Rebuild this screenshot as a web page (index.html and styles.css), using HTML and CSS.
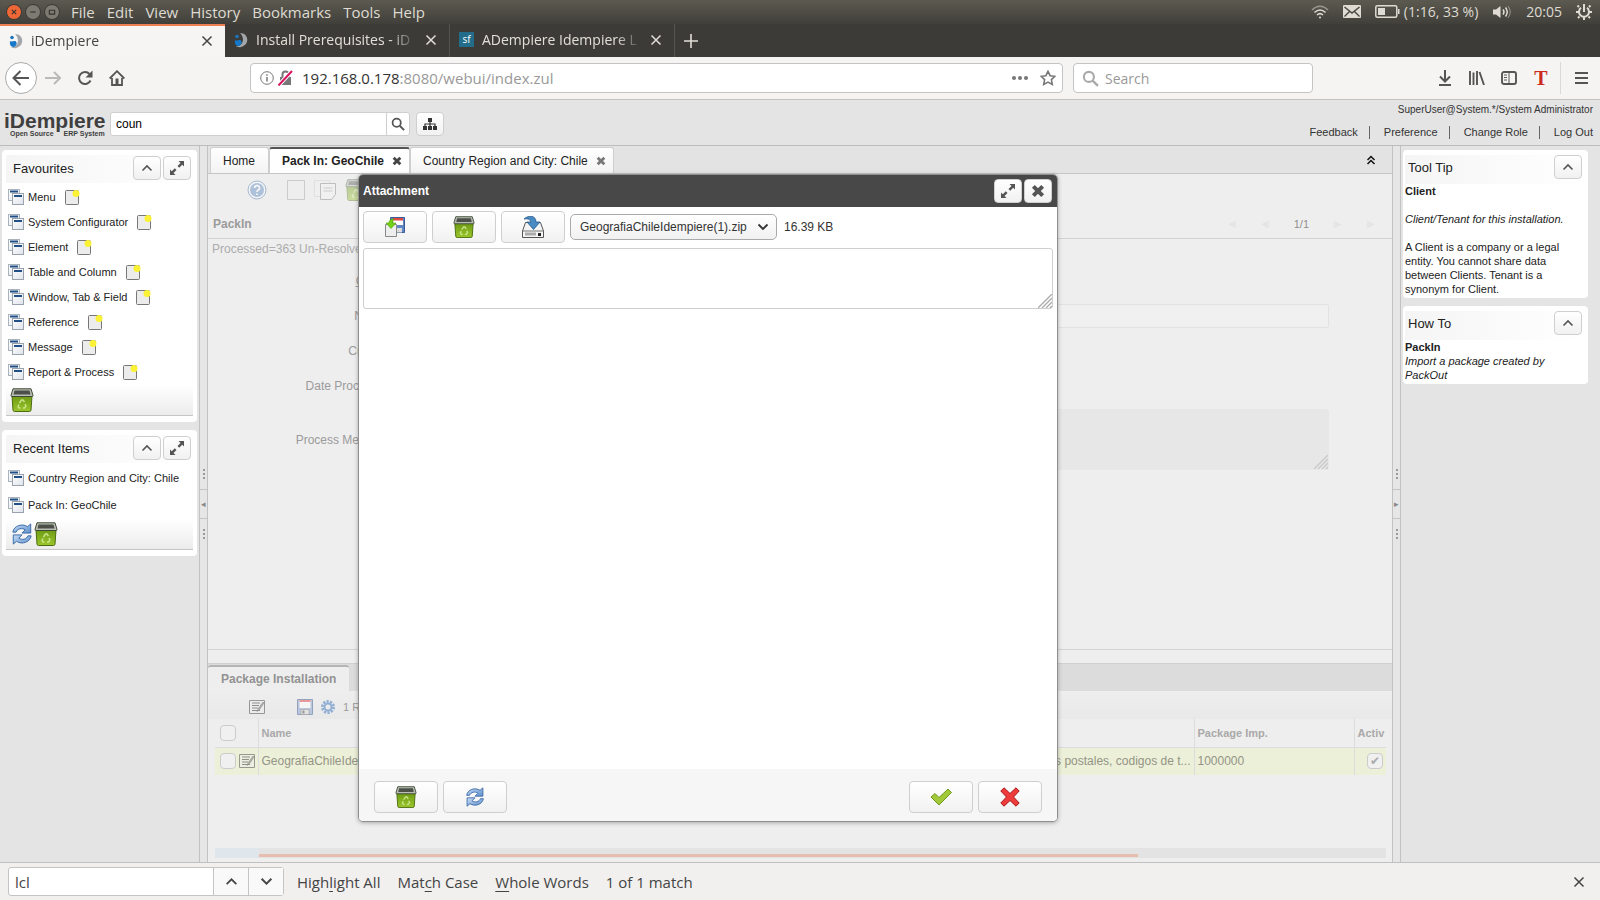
FILE: index.html
```
<!DOCTYPE html>
<html lang="en">
<head>
    <meta charset="UTF-8">
    <meta name="viewport" content="width=device-width, initial-scale=1.0">
    <title>iDempiere</title>
    <link rel="stylesheet" href="styles.css">
</head>
<body>
    <svg class="sprite" aria-hidden="true">
        <defs>
            <linearGradient id="green" x1="0" y1="0" x2="0" y2="1"><stop offset="0" stop-color="#6d9a14"/><stop offset="1" stop-color="#9cc62c"/></linearGradient>
            <linearGradient id="blue" x1="0" y1="0" x2="1" y2="1"><stop offset="0" stop-color="#c8dcf6"/><stop offset="1" stop-color="#5d8fcb"/></linearGradient>
            <linearGradient id="paper" x1="0" y1="0" x2="1" y2="1"><stop offset="0" stop-color="#ffffff"/><stop offset="1" stop-color="#dfe3ea"/></linearGradient>
        </defs>
        <symbol id="i-close" viewBox="0 0 12 12"><path d="M1.5 1.5l9 9M10.5 1.5l-9 9" fill="none" stroke="currentColor" stroke-width="1.5"/></symbol>
        <symbol id="i-times" viewBox="0 0 12 12"><path d="M2 2l8 8M10 2l-8 8" fill="none" stroke="currentColor" stroke-width="3.4"/></symbol>
        <symbol id="i-up" viewBox="0 0 12 12"><path d="M1.500 8.500L6 4l4.500 4.500" fill="none" stroke="currentColor" stroke-width="1.600"/></symbol>
        <symbol id="i-down" viewBox="0 0 12 12"><path d="M1.500 3.500L6 8l4.500-4.500" fill="none" stroke="currentColor" stroke-width="1.800"/></symbol>
        <symbol id="i-expand" viewBox="0 0 14 14"><path d="M8.500 0H14v5.500l-1.800-1.800-3 3L7.500 5l3-3zM5.500 14H0V8.500l1.800 1.800 3-3L6.500 9l-3 3z" fill="currentColor"/></symbol>
        <symbol id="i-lens" viewBox="0 0 16 16"><circle cx="6.500" cy="6.500" r="4.700" fill="none" stroke="currentColor" stroke-width="2"/><path d="M10 10l5 5" stroke="currentColor" stroke-width="2.200"/></symbol>
        <symbol id="i-idemp" viewBox="0 0 14 16"><path d="M6 1c9 0 10 12 1 14-2 .5-4 0-5-1 6 1 10-7 4-13z" fill="#a3a7ab"/><circle cx="3" cy="4.500" r="1.800" fill="#1c75bc"/><path d="M1 8c2 1.500 4-1 6 .5 1.500 2 0 5-2.500 5.500-3 0-4-3-3.500-6z" fill="#1678c8"/></symbol>
        <symbol id="i-window" viewBox="0 0 16 16"><rect x=".5" y=".5" width="11" height="11" fill="url(#paper)" stroke="#aab2bb"/><path d="M2 2.500h8" stroke="#1f4f86" stroke-width="2"/><rect x="4.500" y="4.500" width="11" height="11" fill="url(#paper)" stroke="#9aa3ad"/><path d="M6 7h8" stroke="#1f4f86" stroke-width="2"/></symbol>
        <symbol id="i-new" viewBox="0 0 16 16"><rect x="1.500" y="1.500" width="13" height="14" rx="1" fill="#ececec" stroke="#777"/><circle cx="12" cy="4.500" r="3.500" fill="#fbf236"/></symbol>
        <symbol id="i-trash" viewBox="0 0 24 24"><path d="M2 8h20l-1 14q-.2 1.500-1.500 1.500h-15Q3.200 23.500 3 22z" fill="url(#green)" stroke="#4c6b0f"/><path d="M3 .8h18l2 6.700q0 1-1 1H2q-1 0-1-1z" fill="#b9beb4" stroke="#3f4a35"/><path d="M4.500 2.500h15l1 4h-17z" fill="#4b4f48"/><path d="M9.500 15l2-3h1.500l1.500 2M15 16l1 2-1.500 2h-1.500M10.500 20H9l-1-1.500 1-2" fill="none" stroke="#cbe58a" stroke-width="1.400"/></symbol>
        <symbol id="i-refresh" viewBox="0 0 24 24"><path d="M2 10C3 3 12 0 18 4l3.500-3v10H12l3.500-3.500C12 5 7 6 5.500 10z" fill="url(#blue)" stroke="#3465a4"/><path d="M22 14c-1 7-10 10-16 6l-3.500 3V13H12l-3.500 3.500C12 19 17 18 18.500 14z" fill="url(#blue)" stroke="#3465a4"/></symbol>
        <symbol id="i-edit" viewBox="0 0 16 14"><path d="M.5.5h15v13H.5z" fill="#eee" stroke="#444"/><path d="M3 3h8M3 5.500h7M3 8h6M3 10.500h8" stroke="#333"/><path d="M14 2l-5 7-1 2.500 2.300-1.500L15 3z" fill="#777" stroke="#333" stroke-width=".6"/></symbol>
        <symbol id="i-disk" viewBox="0 0 16 16"><path d="M.5.5h15v15H.5z" fill="#8ca3cf" stroke="#3b5c93"/><path d="M2.500 1h11v8h-11z" fill="#fff"/><path d="M2.500 1h11v2h-11z" fill="#e04848"/><path d="M4 10.500h8v5H4z" fill="#ddd" stroke="#555" stroke-width=".6"/><path d="M5.500 11.500h2v3h-2z" fill="#444"/></symbol>
        <symbol id="i-grip" viewBox="0 0 14 14"><path d="M0 14L14 0M4 14L14 4M8 14l6-6M12 14l2-2" stroke="currentColor" stroke-width="1.300"/></symbol>
    </svg>

    <header class="menubar">
        <div class="win-buttons">
            <button class="win win-close" aria-label="Close window"><svg viewBox="0 0 16 16"><path d="M5.500 5.500l5 5M10.500 5.500l-5 5"/></svg></button>
            <button class="win" aria-label="Minimise"><svg viewBox="0 0 16 16"><path d="M5 8h6"/></svg></button>
            <button class="win" aria-label="Maximise"><svg viewBox="0 0 16 16"><path d="M5 6h6v4.500H5z"/></svg></button>
        </div>
        <nav class="menus">
            <button>File</button><button>Edit</button><button>View</button><button>History</button><button>Bookmarks</button><button>Tools</button><button>Help</button>
        </nav>
        <div class="indicators">
            <svg width="18" height="14" viewBox="0 0 18 14" fill="none" stroke="currentColor" stroke-width="1.600"><path d="M1 5q8-7.500 16 0" opacity=".5"/><path d="M3.500 7.500q5.500-5 11 0M6 10q3-2.700 6 0"/><circle cx="9" cy="12.500" r="1" fill="currentColor" stroke="none"/></svg>
            <svg width="18" height="13" viewBox="0 0 18 13"><rect width="18" height="13" rx="1" fill="currentColor"/><path d="M1.500 2l7.500 6 7.500-6M1.500 11.500l5-5M16.500 11.500l-5-5" fill="none" stroke="#46443e" stroke-width="1.400"/></svg>
            <span class="battery"><svg width="25" height="13" viewBox="0 0 25 13"><rect x=".8" y=".8" width="21" height="11.400" rx="1.500" fill="none" stroke="currentColor" stroke-width="1.500"/><path d="M3 3h7v7H3zM23 4h1.500v5H23z" fill="currentColor"/></svg>(1:16, 33 %)</span>
            <svg width="20" height="14" viewBox="0 0 20 14"><path d="M1 4.500h3L8.500 1v12L4 9.500H1z" fill="currentColor"/><path d="M11 4.500q2 2.500 0 5M13.500 2.500q3.500 4.500 0 9" fill="none" stroke="currentColor" stroke-width="1.500"/><path d="M16 1q4.500 6 0 12" fill="none" stroke="currentColor" opacity=".5"/></svg>
            <span>20:05</span>
            <svg width="16" height="16" viewBox="0 0 16 16" fill="none" stroke="currentColor"><path d="M5 3.800a5 5 0 1 0 6 0" stroke-width="2"/><path d="M8 0v8" stroke-width="2"/><path d="M3 3L1.500 1.500M13 3l1.500-1.500M3 8H0M16 8h-3M3.500 12.500L2 14M12.500 12.500L14 14M8 13v3" stroke-width="2"/></svg>
        </div>
    </header>

    <div class="browser-tabs">
        <div class="btab active">
            <svg width="14" height="16"><use href="#i-idemp"/></svg>
            <span class="btab-title">iDempiere</span>
            <button aria-label="Close tab"><svg width="12" height="12"><use href="#i-close"/></svg></button>
        </div>
        <div class="btab">
            <svg width="14" height="16"><use href="#i-idemp"/></svg>
            <span class="btab-title">Install Prerequisites - iD</span>
            <button aria-label="Close tab"><svg width="12" height="12"><use href="#i-close"/></svg></button>
        </div>
        <div class="btab">
            <span class="sf">sf</span>
            <span class="btab-title">ADempiere Idempiere L</span>
            <button aria-label="Close tab"><svg width="12" height="12"><use href="#i-close"/></svg></button>
        </div>
        <button class="new-tab" aria-label="New tab"><svg width="14" height="14" viewBox="0 0 14 14"><path d="M7 0v14M0 7h14" stroke="currentColor" stroke-width="1.600"/></svg></button>
    </div>

    <div class="navbar">
        <div class="nav-buttons">
            <button class="back" aria-label="Back"><svg width="18" height="16" viewBox="0 0 18 16"><path d="M8.500 1L1.500 8l7 7M2 8h15" fill="none" stroke="currentColor" stroke-width="2"/></svg></button>
            <button class="dim" aria-label="Forward"><svg width="16" height="14" viewBox="0 0 16 14"><path d="M9 1l6 6-6 6M14.500 7H0" fill="none" stroke="currentColor" stroke-width="2"/></svg></button>
            <button aria-label="Reload"><svg width="16" height="16" viewBox="0 0 16 16"><path d="M13.500 10.500a6 6 0 1 1-1-6.500" fill="none" stroke="currentColor" stroke-width="2"/><path d="M15.500.5v7h-7z" fill="currentColor"/></svg></button>
            <button aria-label="Home"><svg width="16" height="16" viewBox="0 0 16 16"><path d="M.7 8.500L8 1.200l7.300 7.300M3 8v7h10V8" fill="none" stroke="currentColor" stroke-width="1.800"/><path d="M6.500 8.500h3V15h-3z" fill="currentColor"/></svg></button>
        </div>
        <div class="urlbar">
            <svg width="14" height="14" viewBox="0 0 14 14"><circle cx="7" cy="7" r="6.300" fill="none" stroke="#777"/><path d="M7 6v4.500M7 3.200v1.500" stroke="#777" stroke-width="1.500"/></svg>
            <svg width="15" height="16" viewBox="0 0 15 16"><path d="M2 7h11v8H2z" fill="#777"/><path d="M4.500 7V4.500a3 3 0 0 1 6 0V7" fill="none" stroke="#777" stroke-width="2"/><path d="M.5 15.500L14 1" stroke="#fff" stroke-width="4"/><path d="M.5 15.500L14 1" stroke="#d8155c" stroke-width="2"/></svg>
            <div class="url">192.168.0.178<span>:8080/webui/index.zul</span></div>
            <svg width="16" height="4" viewBox="0 0 16 4" fill="#777"><circle cx="2" cy="2" r="2"/><circle cx="8" cy="2" r="2"/><circle cx="14" cy="2" r="2"/></svg>
            <svg class="star" width="16" height="16" viewBox="0 0 16 16"><path d="M8 1.300l2.100 4.400 4.800.6-3.500 3.300.9 4.800L8 12.100l-4.300 2.300.9-4.800L1.100 6.300l4.800-.6z" fill="none" stroke="#777" stroke-width="1.600"/></svg>
        </div>
        <label class="websearch">
            <svg width="17" height="17"><use href="#i-lens"/></svg>
            <input type="text" placeholder="Search" aria-label="Search the web">
        </label>
        <div class="nav-tools">
            <button aria-label="Downloads"><svg width="14" height="16" viewBox="0 0 14 16"><path d="M7 0v11M2 6.500L7 11.500l5-5M1 15h12" fill="none" stroke="currentColor" stroke-width="2"/></svg></button>
            <button aria-label="Library"><svg width="16" height="14" viewBox="0 0 16 14"><path d="M1 0v14M4.500 1.500V14M8 0v14M10.500 1l4.500 13" stroke="currentColor" stroke-width="1.900"/></svg></button>
            <button aria-label="Sidebars"><svg width="16" height="14" viewBox="0 0 16 14"><rect x="1" y="1" width="14" height="12" rx="2" fill="none" stroke="currentColor" stroke-width="1.900"/><path d="M8 1v12M3 4h3M3 6.500h3M3 9h3" stroke="currentColor"/></svg></button>
            <button class="tee" aria-label="T extension">T</button>
            <button class="burger" aria-label="Menu"><svg width="13" height="12" viewBox="0 0 13 12"><path d="M0 1h13M0 6h13M0 11h13" stroke="currentColor" stroke-width="2"/></svg></button>
        </div>
    </div>

    <div class="app-header">
        <div class="logo"><b>iDempiere</b><small><span>Open Source</span><span>ERP System</span></small></div>
        <div class="menu-search">
            <input type="text" value="coun" aria-label="Search menu">
            <button aria-label="Search"><svg width="14" height="14"><use href="#i-lens"/></svg></button>
        </div>
        <button class="btn tree-btn" aria-label="Menu tree"><svg width="14" height="12" viewBox="0 0 14 12"><path d="M5 0h4v4H5zM0 8h4v4H0zM5 8h4v4H5zM10 8h4v4h-4z" fill="#333"/><path d="M7 4v4M2 8V6h10v2" fill="none" stroke="#333" stroke-width="1.200"/></svg></button>
        <div class="user-area">
            <span class="user-name">SuperUser@System.*/System Administrator</span>
            <nav><a href="#">Feedback</a><a href="#">Preference</a><a href="#">Change Role</a><a href="#">Log Out</a></nav>
        </div>
    </div>

    <main class="desktop">
        <aside class="side left">
            <section class="panel">
                <div class="panel-head"><h2>Favourites</h2>
                    <button class="btn" aria-label="Collapse"><svg width="12" height="12"><use href="#i-up"/></svg></button>
                    <button class="btn" aria-label="Maximise"><svg width="14" height="14"><use href="#i-expand"/></svg></button>
                </div>
                <ul class="items">
                    <li><svg><use href="#i-window"/></svg><a href="#">Menu</a><svg><use href="#i-new"/></svg></li>
                    <li><svg><use href="#i-window"/></svg><a href="#">System Configurator</a><svg><use href="#i-new"/></svg></li>
                    <li><svg><use href="#i-window"/></svg><a href="#">Element</a><svg><use href="#i-new"/></svg></li>
                    <li><svg><use href="#i-window"/></svg><a href="#">Table and Column</a><svg><use href="#i-new"/></svg></li>
                    <li><svg><use href="#i-window"/></svg><a href="#">Window, Tab &amp; Field</a><svg><use href="#i-new"/></svg></li>
                    <li><svg><use href="#i-window"/></svg><a href="#">Reference</a><svg><use href="#i-new"/></svg></li>
                    <li><svg><use href="#i-window"/></svg><a href="#">Message</a><svg><use href="#i-new"/></svg></li>
                    <li><svg><use href="#i-window"/></svg><a href="#">Report &amp; Process</a><svg><use href="#i-new"/></svg></li>
                </ul>
                <div class="panel-foot">
                    <button aria-label="Delete"><svg width="24" height="24"><use href="#i-trash"/></svg></button>
                </div>
            </section>
            <section class="panel">
                <div class="panel-head"><h2>Recent Items</h2>
                    <button class="btn" aria-label="Collapse"><svg width="12" height="12"><use href="#i-up"/></svg></button>
                    <button class="btn" aria-label="Maximise"><svg width="14" height="14"><use href="#i-expand"/></svg></button>
                </div>
                <ul class="items recent">
                    <li><svg><use href="#i-window"/></svg><a href="#">Country Region and City: Chile</a></li>
                    <li><svg><use href="#i-window"/></svg><a href="#">Pack In: GeoChile</a></li>
                </ul>
                <div class="panel-foot">
                    <button aria-label="Refresh"><svg width="24" height="22"><use href="#i-refresh"/></svg></button>
                    <button aria-label="Delete"><svg width="24" height="24"><use href="#i-trash"/></svg></button>
                </div>
            </section>
        </aside>
        <div class="splitter"><i></i><button aria-label="Collapse left">◂</button><i></i></div>

        <section class="center">
            <div class="tabs">
                <div class="tab"><a href="#">Home</a></div>
                <div class="tab current"><a href="#">Pack In: GeoChile</a><button aria-label="Close"><svg width="10" height="10"><use href="#i-times"/></svg></button></div>
                <div class="tab"><a href="#">Country Region and City: Chile</a><button aria-label="Close"><svg width="10" height="10"><use href="#i-times"/></svg></button></div>
                <button class="roll" aria-label="Hide header"><svg width="10" height="10" viewBox="0 0 10 10"><path d="M1.500 5L5 1.500 8.500 5M1.500 9L5 5.500 8.500 9" fill="none" stroke="#111" stroke-width="1.500"/></svg></button>
            </div>

            <div class="window">
                <div class="toolbar">
                    <svg class="help-icon" width="20" height="20" viewBox="0 0 20 20"><circle cx="10" cy="10" r="9" fill="#fff" stroke="#3465a4"/><circle cx="10" cy="10" r="7" fill="#4f7fbd"/><path d="M7.500 8a2.500 2.500 0 1 1 3.500 2.300q-1 .5-1 1.700M10 13.500v1.500" fill="none" stroke="#fff" stroke-width="1.800"/></svg>
                    <svg width="18" height="20" viewBox="0 0 18 20"><path d="M.5.5h17v19H.5z" fill="#eee" stroke="#999"/></svg>
                    <svg width="22" height="20" viewBox="0 0 22 20"><path d="M.5.500h15v16H.5z" fill="#f2f2f2" stroke="#ccc"/><path d="M6.500 3.500h15v11l-4 5h-11z" fill="#f4f4f4" stroke="#777"/><path d="M9.500 8h9M9.500 11h9" stroke="#999"/></svg>
                    <svg width="22" height="22"><use href="#i-trash"/></svg>
                </div>
                <div class="crumb"><b>PackIn</b><div class="pager"><span>◀</span><span>◀</span><span class="count">1/1</span><span>▶</span><span>▶</span></div></div>
                <p class="status">Processed=363 Un-Resolved=0</p>
                <form class="fields">
                    <label for="client"><u>Client*</u></label><input id="client" type="text">
                    <label for="name">Name*</label><input id="name" type="text">
                    <label for="created">Created</label><input id="created" type="text">
                    <label for="processed">Date Processed</label><input id="processed" type="text">
                    <label for="message">Process Message</label><div class="area"><textarea id="message" readonly></textarea><svg width="14" height="14"><use href="#i-grip"/></svg></div>
                </form>

                <div class="detail">
                    <div class="detail-tabs"><a href="#">Package Installation</a></div>
                    <div class="detail-tools">
                        <svg width="16" height="14"><use href="#i-edit"/></svg>
                        <svg class="save" width="16" height="16"><use href="#i-disk"/></svg>
                        <svg width="14" height="14" viewBox="0 0 14 14"><circle cx="7" cy="7" r="5.500" fill="none" stroke="#3d77bd" stroke-width="3" stroke-dasharray="2.200 1.200"/><circle cx="7" cy="7" r="3.500" fill="none" stroke="#3d77bd" stroke-width="2"/></svg>
                        <span>1 Records</span>
                    </div>
                    <table>
                        <colgroup><col class="c-check"><col class="c-name"><col><col class="c-imp"><col class="c-active"></colgroup>
                        <thead>
                            <tr><th><input type="checkbox" aria-label="Select all"></th><th>Name</th><th>Description</th><th>Package Imp.</th><th>Activ</th></tr>
                        </thead>
                        <tbody>
                            <tr><td><div class="rowhead"><input type="checkbox" aria-label="Select row"><svg width="16" height="14"><use href="#i-edit"/></svg></div></td><td>GeografiaChileIdempiere</td><td class="desc">codigos postales, codigos de t...</td><td>1000000</td><td class="act"><input type="checkbox" checked aria-label="Active"></td></tr>
                        </tbody>
                    </table>
                    <div class="hscroll"><i></i></div>
                </div>
            </div>
        </section>

        <div class="splitter"><i></i><button aria-label="Collapse right">▸</button><i></i></div>
        <aside class="side right">
            <section class="panel">
                <div class="panel-head"><h2>Tool Tip</h2><button class="btn" aria-label="Collapse"><svg width="12" height="12"><use href="#i-up"/></svg></button></div>
                <div class="help"><b>Client</b><br><br><em>Client/Tenant for this installation.</em><br><br>A Client is a company or a legal entity. You cannot share data between Clients. Tenant is a synonym for Client.</div>
            </section>
            <section class="panel">
                <div class="panel-head"><h2>How To</h2><button class="btn" aria-label="Collapse"><svg width="12" height="12"><use href="#i-up"/></svg></button></div>
                <div class="help"><b>PackIn</b><br><em>Import a package created by PackOut</em></div>
            </section>
        </aside>

        <div class="dialog" role="dialog" aria-label="Attachment">
            <div class="dialog-head"><h2>Attachment</h2>
                <button class="btn" aria-label="Maximise"><svg width="14" height="14"><use href="#i-expand"/></svg></button>
                <button class="btn" aria-label="Close"><svg width="14" height="14"><use href="#i-times"/></svg></button>
            </div>
            <div class="dialog-body">
                <div class="dialog-tools">
                    <button class="btn wide" aria-label="Load"><svg width="22" height="22" viewBox="0 0 22 22"><path d="M6.500 1.500h14v15h-14z" fill="#5f86c4" stroke="#3b5c93"/><path d="M9 2h10v7H9z" fill="#fff"/><path d="M9 2h10v2.500H9z" fill="#e04848"/><path d="M12 12h6v4.500h-6z" fill="#ddd"/><path d="M1.500 8.500h11v12h-11z" fill="#eee" stroke="#888"/><path d="M10 3c-4 0-5 2-5 4H2l5 5.500L12 7H8.500q0-2 1.500-4z" fill="#73d216" stroke="#4e9a06" stroke-width=".6"/></svg></button>
                    <button class="btn wide" aria-label="Delete entry"><svg width="22" height="22"><use href="#i-trash"/></svg></button>
                    <button class="btn wide" aria-label="Export"><svg width="22" height="22" viewBox="0 0 22 22"><path d="M3.500 6.500h15l3 8.500v6.500H.5V15z" fill="#f4f4f4" stroke="#555"/><path d="M.5 15h21" stroke="#777"/><path d="M3 18h11" stroke="#aaa" stroke-width="3"/><path d="M16 17h3v3h-3z" fill="#222"/><path d="M2 3C6-1 14-1 14 6h4l-6.500 7.500L5 6h4Q8 2 2 3z" fill="#4b8bc4" stroke="#245a8d" stroke-width=".8"/></svg></button>
                    <div class="file">
                        <select aria-label="Attachment file"><option>GeografiaChileIdempiere(1).zip</option></select>
                        <svg width="12" height="12"><use href="#i-down"/></svg>
                    </div>
                    <span class="size">16.39 KB</span>
                </div>
                <div class="area"><textarea aria-label="Text"></textarea><svg width="14" height="14"><use href="#i-grip"/></svg></div>
            </div>
            <div class="dialog-foot">
                <button class="btn wide" aria-label="Delete all"><svg width="22" height="22"><use href="#i-trash"/></svg></button>
                <button class="btn wide" aria-label="Refresh"><svg width="20" height="20"><use href="#i-refresh"/></svg></button>
                <button class="btn wide ok" aria-label="OK"><svg width="22" height="18" viewBox="0 0 22 18"><path d="M1 9l4-3.500 4 4L18 1l3.500 3.500L9 17z" fill="#a3c93a" stroke="#6f9a1c"/></svg></button>
                <button class="btn wide" aria-label="Cancel"><svg width="20" height="20" viewBox="0 0 20 20"><path d="M4 0.800L10 6.500 16 .8 19.200 4 13.500 10l5.700 6-3.200 3.200-6-5.700-6 5.700L.8 16l5.700-6L.8 4z" fill="#ee3b3b" stroke="#a81414"/></svg></button>
            </div>
        </div>
    </main>

    <footer class="findbar">
        <div class="find-box">
            <input type="text" value="lcl" aria-label="Find in page">
            <button aria-label="Previous"><svg width="13" height="13"><use href="#i-up"/></svg></button>
            <button aria-label="Next"><svg width="13" height="13"><use href="#i-down"/></svg></button>
        </div>
        <button>High<u>l</u>ight All</button>
        <button>Mat<u>c</u>h Case</button>
        <button><u>W</u>hole Words</button>
        <span>1 of 1 match</span>
        <button class="find-close" aria-label="Close find bar"><svg width="12" height="12"><use href="#i-close"/></svg></button>
    </footer>
</body>
</html>
```
FILE: styles.css
```
* {
    box-sizing: border-box;
}
body {
    margin: 0;
    height: 100vh;
    display: flex;
    flex-direction: column;
    overflow: hidden;
    font-family: "Liberation Sans", Arial, sans-serif;
    font-size: 12px;
    color: #333;
    background: #e4e4e4;
}
.sprite {
    position: absolute;
    width: 0;
    height: 0;
}
svg {
    display: block;
    flex: none;
}
button {
    padding: 0;
    border: none;
    background: none;
    color: inherit;
    font: inherit;
    cursor: pointer;
}
input, textarea, select {
    font: inherit;
    color: inherit;
    outline: none;
}
a {
    color: inherit;
    text-decoration: none;
}
h2 {
    margin: 0;
    font-size: 13px;
    font-weight: normal;
}

/* desktop menu bar */
.menubar, .browser-tabs, .navbar, .findbar {
    font-family: "Open Sans", "Noto Sans", sans-serif;
    font-size: 14px;
}
.menubar {
    flex: none;
    height: 24px;
    padding: 0 8px 1px 6px;
    display: flex;
    align-items: center;
    color: #dfdbd2;
    background: linear-gradient(#5c5a50, #403f3a);
}
.win-buttons {
    display: flex;
    gap: 3px;
    margin-right: 11px;
}
.win {
    width: 16px;
    height: 16px;
    border-radius: 50%;
    background: #7c7a71;
    border: 1px solid #3a3935;
}
.win svg {
    width: 14px;
    height: 14px;
    fill: none;
    stroke: #35342f;
    stroke-width: 1.3;
}
.win-close {
    background: #ee6737;
}
.menus {
    display: flex;
    gap: 12px;
    font-size: 15px;
    line-height: 20px;
}
.indicators {
    margin-left: auto;
    display: flex;
    align-items: center;
    gap: 14px;
}
.battery {
    display: flex;
    align-items: center;
    gap: 4px;
}

/* browser tabs */
.browser-tabs {
    flex: none;
    height: 33px;
    display: flex;
    background: #3c3b37;
    color: #e2dfd8;
}
.btab {
    width: 225px;
    padding: 0 12px 2px 9px;
    display: flex;
    align-items: center;
    gap: 8px;
    border-right: 1px solid #55544f;
}
.btab-title {
    flex: 1;
    overflow: hidden;
    white-space: nowrap;
    -webkit-mask-image: linear-gradient(to right, #000 84%, transparent);
    mask-image: linear-gradient(to right, #000 84%, transparent);
}
.btab.active {
    background: #f6f5f4;
    color: #444;
    border-top: 2px solid #ee7f52;
    border-right: none;
}
.sf {
    width: 15px;
    height: 15px;
    background: #236c8a;
    color: #fff;
    font-size: 10px;
    line-height: 14px;
    text-align: center;
}
.new-tab {
    padding: 0 9px;
}

/* navigation bar */
.navbar {
    flex: none;
    height: 43px;
    padding: 0 12px 0 5px;
    display: flex;
    align-items: center;
    background: #f5f4f3;
    border-bottom: 1px solid #c3c3c3;
    color: #555;
}
.nav-buttons {
    display: flex;
    align-items: center;
    width: 245px;
    flex: none;
}
.nav-buttons button {
    width: 32px;
    height: 32px;
    display: flex;
    align-items: center;
    justify-content: center;
}
.nav-buttons .back {
    background: #fff;
    border: 1px solid #aaa;
    border-radius: 50%;
}
.nav-buttons .dim {
    color: #b9b9b9;
}
.urlbar, .websearch {
    height: 30px;
    display: flex;
    align-items: center;
    background: #fff;
    border: 1px solid #c4c4c4;
    border-radius: 4px;
}
.urlbar {
    flex: 1;
    padding: 0 6px 0 9px;
    gap: 4px;
}
.url {
    flex: 1;
    margin-left: 5px;
    font-size: 15px;
    line-height: 20px;
    color: #333;
}
.url span {
    color: #999;
}
.star {
    margin-left: 8px;
}
.websearch {
    width: 240px;
    margin-left: 10px;
    padding-left: 8px;
    gap: 4px;
    color: #aaa;
}
.websearch input {
    flex: 1;
    min-width: 0;
    border: none;
    background: none;
}
.websearch input::placeholder {
    color: #999;
}
.nav-tools {
    width: 275px;
    display: flex;
    align-items: center;
    justify-content: flex-end;
}
.nav-tools button {
    width: 32px;
    height: 32px;
    display: flex;
    align-items: center;
    justify-content: center;
}
.nav-tools .tee {
    font: bold 20px "Liberation Serif", serif;
    color: #cc2a1c;
}
.nav-tools .burger {
    width: 28px;
    margin-left: 3px;
    padding-left: 13px;
    border-left: 1px solid #d9d9d9;
}

/* application header */
.app-header {
    flex: none;
    height: 46px;
    padding: 3px 7px 0 4px;
    display: flex;
    align-items: center;
    border-bottom: 1px solid #bdbdbd;
    background: #e4e4e4;
}
.logo {
    width: 106px;
    display: flex;
    flex-direction: column;
    color: #3f3f3f;
}
.logo b {
    font-size: 21px;
    line-height: 18px;
}
.logo small {
    display: flex;
    gap: 10px;
    padding-left: 6px;
    font-size: 7px;
    font-weight: bold;
    line-height: 7px;
}
.menu-search {
    display: flex;
    width: 300px;
    height: 24px;
    background: #fff;
    border: 1px solid #cfcfcf;
    border-radius: 3px;
}
.menu-search input {
    flex: 1;
    min-width: 0;
    padding: 0 5px;
    border: none;
    background: none;
    color: #000;
}
.menu-search button {
    width: 23px;
    border-left: 1px solid #cfcfcf;
    display: flex;
    align-items: center;
    justify-content: center;
    color: #555;
}
.btn {
    width: 28px;
    height: 24px;
    display: flex;
    align-items: center;
    justify-content: center;
    color: #555;
    background: linear-gradient(#fff, #f1f1f1);
    border: 1px solid #cfcfcf;
    border-radius: 4px;
}
.btn.wide {
    width: 64px;
    height: 32px;
}
.tree-btn {
    margin-left: 6px;
}
.user-area {
    align-self: flex-start;
    margin-left: auto;
    display: flex;
    flex-direction: column;
    align-items: flex-end;
    gap: 10px;
    font-size: 11px;
    line-height: 13px;
}
.user-name {
    font-size: 10px;
}
.user-area nav {
    display: flex;
}
.user-area a + a {
    margin-left: 11px;
    padding-left: 14px;
    border-left: 1px solid #666;
}

/* desktop */
.desktop {
    position: relative;
    flex: 1;
    min-height: 0;
    display: flex;
}
.side {
    flex: none;
    width: 199px;
    display: flex;
    flex-direction: column;
    gap: 8px;
    font-size: 11px;
    color: #222;
}
.side.left {
    padding: 4px 2px;
}
.side.right {
    padding: 4px 12px 0 2px;
}
.panel {
    background: #fff;
    border-radius: 4px;
}
.left .panel {
    padding: 5px 4px 6px;
}
.panel-head {
    display: flex;
    align-items: center;
    gap: 2px;
    height: 28px;
    padding: 0 2px 2px 7px;
    background: linear-gradient(to right, #f5f5f5, #fff);
}
.panel-head h2 {
    flex: 1;
}
.items {
    list-style: none;
    margin: 0;
    padding: 1px 2px;
}
.items li {
    display: flex;
    align-items: center;
    height: 25px;
}
.items li svg {
    width: 16px;
    height: 16px;
}
.items a {
    margin: 0 8px 0 4px;
}
.recent li {
    height: 27px;
}
.panel-foot {
    display: flex;
    align-items: center;
    height: 31px;
    padding: 0 4px;
    background: linear-gradient(#fff, #ececec);
    border-bottom: 1px solid #c6c6c6;
}
.right .panel {
    padding: 5px 2px 2px;
}
.right .panel-head {
    height: 29px;
    padding: 0 4px 5px 3px;
}
.help {
    line-height: 14px;
}
.splitter {
    flex: none;
    width: 9px;
    display: flex;
    flex-direction: column;
    align-items: center;
    justify-content: center;
    gap: 10px;
    border: 1px solid #c2c2c2;
    border-width: 0 1px;
    background: #e6e6e6;
}
.splitter i {
    height: 10px;
    border-left: 2px dotted #999;
}
.splitter button {
    width: 7px;
    height: 30px;
    border: 1px solid #c2c2c2;
    border-width: 1px 0;
    color: #888;
    font-size: 9px;
}
.center {
    flex: 1;
    min-width: 0;
    display: flex;
    flex-direction: column;
    background: #eee;
}
.tabs {
    flex: none;
    height: 28px;
    padding: 1px 16px 0 2px;
    display: flex;
    background: #e3e3e3;
    border-bottom: 1px solid #c6c6c6;
}
.tab {
    display: flex;
    align-items: center;
    gap: 8px;
    min-width: 59px;
    padding: 0 7px 0 12px;
    background: linear-gradient(#fff, #f3f3f3);
    border: 1px solid #cfcfcf;
    border-bottom: none;
    border-radius: 3px 3px 0 0;
    color: #222;
}
.tab button {
    color: #777;
}
.tab.current {
    background: #fff;
    border-top: 2px solid #555;
    font-weight: bold;
}
.tab.current button {
    color: #444;
}
.roll {
    margin-left: auto;
}

/* dimmed window behind the dialog */
.window {
    flex: 1;
    min-height: 0;
    display: flex;
    flex-direction: column;
    color: #9b9b9b;
}
.toolbar {
    display: flex;
    align-items: center;
    gap: 9px;
    height: 31px;
    padding-left: 39px;
    opacity: .4;
}
.help-icon {
    margin-right: 11px;
}
.crumb {
    display: flex;
    align-items: center;
    justify-content: space-between;
    height: 34px;
    padding: 4px 17px 0 5px;
    border-bottom: 1px solid #d2d2d2;
}
.pager {
    display: flex;
    align-items: center;
    gap: 25px;
    font-size: 10px;
    color: #e5e5e5;
}
.pager .count {
    font-size: 11px;
    color: #8f8f8f;
}
.status {
    margin: 3px 4px 13px;
    line-height: 14px;
    color: #acacac;
}
.fields {
    display: grid;
    grid-template-columns: 183px 1fr;
    column-gap: 8px;
    row-gap: 11px;
    align-items: center;
    padding-right: 63px;
}
.fields label {
    text-align: right;
}
.fields input, .fields textarea {
    width: 100%;
    height: 24px;
    border: 1px solid #e2e2e2;
    border-radius: 2px;
    background: #f0f0f0;
}
.fields #client, .fields #created, .fields #processed {
    width: 360px;
}
.area {
    position: relative;
    height: 61px;
    color: #aaa;
}
.area textarea {
    display: block;
    width: 100%;
    height: 61px;
    resize: none;
    background: #fff;
    border: 1px solid #cfcfcf;
    border-radius: 3px;
}
.area svg {
    position: absolute;
    right: 1px;
    bottom: 1px;
}
.fields textarea {
    background: #e7e7e7;
    border-color: #e7e7e7;
}
.fields .area {
    color: #c8c8c8;
}
.detail {
    margin-top: auto;
    height: 213px;
    padding-top: 13px;
    border-top: 1px solid #d4d4d4;
    display: flex;
    flex-direction: column;
}
.detail-tabs {
    flex: none;
    display: flex;
    height: 28px;
    background: #dcdcdc;
    border-top: 1px solid #d0d0d0;
}
.detail-tabs a {
    margin-top: 1px;
    padding: 5px 13px;
    background: #eee;
    border-top: 2px solid #b5b5b5;
    border-radius: 3px 3px 0 0;
    font-weight: bold;
    color: #929292;
}
.detail-tools {
    display: flex;
    align-items: center;
    gap: 8px;
    height: 28px;
    padding: 3px 0 0 41px;
    font-size: 11px;
    background: linear-gradient(#eee, #e9e9e9);
}
.detail-tools svg, .rowhead svg {
    opacity: .5;
}
.detail-tools .save {
    margin-left: 24px;
}
table {
    width: calc(100% - 13px);
    margin-left: 7px;
    table-layout: fixed;
    border-collapse: collapse;
}
th, td {
    height: 28px;
    padding: 0 3px;
    text-align: left;
    overflow: hidden;
    white-space: nowrap;
    border-left: 1px solid #dcdcdc;
}
th {
    font-size: 11px;
    color: #a9a9a9;
    border-bottom: 1px solid #dcdcdc;
}
td {
    background: #edf0d8;
    color: #939486;
}
th:first-child, td:first-child {
    padding-left: 5px;
    border-left: none;
}
.c-check {
    width: 43px;
}
.c-name {
    width: 420px;
}
.c-imp {
    width: 160px;
}
.c-active {
    width: 32px;
}
.desc {
    text-align: right;
}
.rowhead {
    display: flex;
    align-items: center;
    gap: 3px;
}
input[type="checkbox"] {
    appearance: none;
    display: block;
    flex: none;
    width: 16px;
    height: 16px;
    margin: 0;
    border: 1px solid #ccc;
    border-radius: 4px;
    background: #f0f0f0;
}
.act input {
    margin-left: auto;
}
.act input:checked::before {
    content: "✔";
    display: block;
    font-size: 12px;
    line-height: 14px;
    text-align: center;
    color: #aaa;
}
.hscroll {
    height: 10px;
    margin: auto 6px 4px 7px;
    padding: 6px 0 0 44px;
    background: linear-gradient(to right, #dfe7ed 44px, #e3e3e3 44px);
}
.hscroll i {
    display: block;
    width: 78%;
    height: 3px;
    background: #e7bdb0;
}

/* attachment dialog */
.dialog {
    position: absolute;
    left: 358px;
    top: 28px;
    width: 700px;
    height: 648px;
    display: flex;
    flex-direction: column;
    background: #fff;
    border: 1px solid #8f8f8f;
    border-radius: 5px;
    box-shadow: 0 1px 4px rgba(0,0,0,.3);
    overflow: hidden;
}
.dialog-head {
    flex: none;
    height: 32px;
    display: flex;
    align-items: center;
    gap: 2px;
    padding: 0 5px 0 4px;
    background: #484848;
}
.dialog-head h2 {
    flex: 1;
    color: #fff;
    font-size: 12px;
    font-weight: bold;
}
.dialog-body {
    flex: 1;
    padding: 4px;
}
.dialog-tools {
    display: flex;
    align-items: center;
    gap: 5px;
    margin-bottom: 5px;
}
.file {
    position: relative;
    display: flex;
    align-items: center;
}
.file select {
    appearance: none;
    width: 207px;
    height: 26px;
    padding: 0 9px;
    background: linear-gradient(#fff, #f1f1f1);
    border: 1px solid #aaa;
    border-radius: 5px;
}
.file svg {
    position: absolute;
    right: 8px;
}
.size {
    margin-left: 2px;
}
.dialog-foot {
    flex: none;
    display: flex;
    align-items: center;
    gap: 5px;
    height: 52px;
    padding: 4px 15px 0;
    background: #f6f6f6;
}
.ok {
    margin-left: auto;
}

/* find bar */
.findbar {
    flex: none;
    height: 38px;
    padding: 0 15px 0 8px;
    display: flex;
    align-items: center;
    gap: 17px;
    background: #f1f0ef;
    border-top: 1px solid #c0c0c0;
    color: #444;
    font-size: 15px;
}
.find-box {
    display: flex;
    width: 276px;
    height: 29px;
    margin-right: -4px;
    border: 1px solid #c4c4c4;
    border-radius: 3px;
    background: #fff;
}
.find-box input {
    flex: 1;
    min-width: 0;
    padding: 0 6px;
    border: none;
    background: none;
}
.find-box button {
    width: 35px;
    display: flex;
    align-items: center;
    justify-content: center;
    border-left: 1px solid #c4c4c4;
    background: #f9f9f9;
}
.findbar u {
    text-underline-offset: 3px;
}
.find-close {
    margin-left: auto;
}
```
